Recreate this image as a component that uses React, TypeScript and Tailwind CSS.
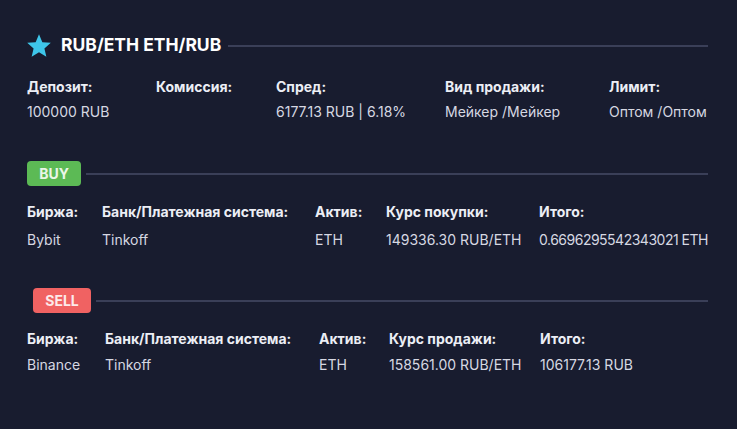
import React from "react";

const font = { fontFamily: "Inter, 'Noto Sans', sans-serif" };

function Col({ w, label, value, gap, vc }: { w: string; label: string; value: string; gap: string; vc?: string }) {
  return (
    <div className={`${w} shrink-0 flex flex-col`}>
      <div className="text-[14px] font-bold text-[#eceef5] leading-[16px] whitespace-nowrap">{label}</div>
      <div className={`${gap} text-[14px] text-[#d6d8e2] leading-[16px] whitespace-nowrap ${vc ?? ""}`}>{value}</div>
    </div>
  );
}

export default function App() {
  return (
    <div className="w-[737px] h-[429px] bg-[#181c2f] overflow-hidden" style={font}>
      <div className="pl-[27px] pr-[29px] pt-[33px]">
        <div className="flex items-center h-[25px]">
          <svg width="26" height="26" viewBox="0 0 24 24" className="shrink-0 -ml-[1px]">
            <path d="M12 1.2l3.1 7.3 7.8.6-5.9 5.1 1.8 7.7L12 17.8 5.2 21.9 7 14.2 1.1 9.1l7.8-.6z" fill="#3ec6ea" />
          </svg>
          <div className="ml-[9px] text-[17.5px] font-bold text-white whitespace-nowrap">RUB/ETH ETH/RUB</div>
          <div className="ml-[7px] flex-1 h-[2px] bg-[#3a3f58]" />
        </div>
        <div className="flex mt-[21px]">
          <Col gap="mt-[9px]" w="w-[129px]" label="Депозит:" value="100000 RUB" />
          <Col gap="mt-[9px]" w="w-[120px]" label="Комиссия:" value="" />
          <Col gap="mt-[9px]" w="w-[169px]" label="Спред:" value="6177.13 RUB | 6.18%" />
          <Col gap="mt-[9px]" w="w-[164px]" label="Вид продажи:" value="Мейкер /Мейкер" />
          <Col gap="mt-[9px]" w="w-[100px]" label="Лимит:" value="Оптом /Оптом" />
        </div>

        <div className="flex items-center mt-[41px] h-[25px]">
          <div className="w-[54px] h-[25px] rounded-[4px] bg-[#5cba55] flex items-center justify-center text-[14px] font-bold text-[#eaf6e8]">BUY</div>
          <div className="ml-[5px] flex-1 h-[2px] bg-[#3a3f58]" />
        </div>
        <div className="flex mt-[18px]">
          <Col gap="mt-[12px]" w="w-[75px]" label="Биржа:" value="Bybit" />
          <Col gap="mt-[12px]" w="w-[213px]" label="Банк/Платежная система:" value="Tinkoff" />
          <Col gap="mt-[12px]" w="w-[71px]" label="Актив:" value="ETH" />
          <Col gap="mt-[12px]" w="w-[153px]" label="Курс покупки:" value="149336.30 RUB/ETH" />
          <Col gap="mt-[12px]" w="w-[180px]" label="Итого:" value="0.6696295542343021 ETH" vc="tracking-[-0.5px]" />
        </div>

        <div className="flex items-center mt-[40px] h-[25px]">
          <div className="ml-[6px] w-[58px] h-[25px] rounded-[4px] bg-[#f06262] flex items-center justify-center text-[14px] font-bold text-[#fdeaea]">SELL</div>
          <div className="ml-[5px] flex-1 h-[2px] bg-[#3a3f58]" />
        </div>
        <div className="flex mt-[18px]">
          <Col gap="mt-[10px]" w="w-[78px]" label="Биржа:" value="Binance" />
          <Col gap="mt-[10px]" w="w-[214px]" label="Банк/Платежная система:" value="Tinkoff" />
          <Col gap="mt-[10px]" w="w-[70px]" label="Актив:" value="ETH" />
          <Col gap="mt-[10px]" w="w-[151px]" label="Курс продажи:" value="158561.00 RUB/ETH" />
          <Col gap="mt-[10px]" w="w-[150px]" label="Итого:" value="106177.13 RUB" />
        </div>
      </div>
    </div>
  );
}
